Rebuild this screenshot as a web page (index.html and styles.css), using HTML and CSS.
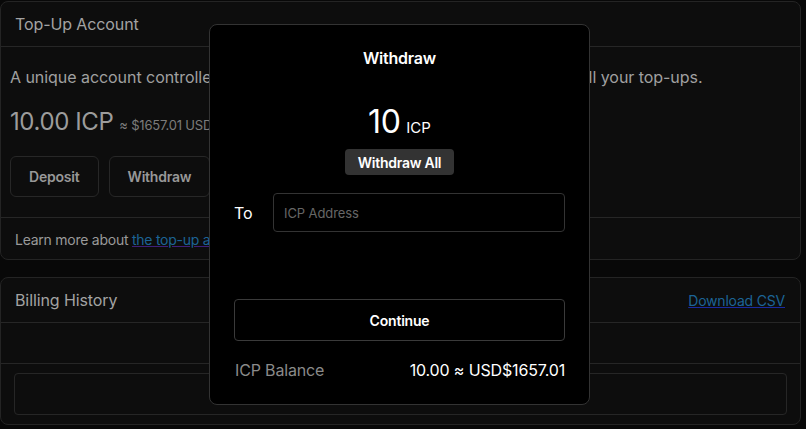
FILE: index.html
```html
<!DOCTYPE html>
<html>
<head>
<meta charset="utf-8">
<link rel="stylesheet" href="styles.css">
</head>
<body>
<div class="page">
  <section class="card">
    <div class="card-head">Top-Up Account</div>
    <div class="card-body">
      <p class="desc">A unique account controlled by your Internet Identity will be used to pay for all your top-ups.</p>
      <div class="balance"><span class="big">10.00 ICP</span><span class="usd">≈ $1657.01 USD</span></div>
      <div class="actions">
        <button class="btn">Deposit</button>
        <button class="btn">Withdraw</button>
      </div>
    </div>
    <div class="card-foot">Learn more about <a class="link" href="#">the top-up account</a>.</div>
  </section>

  <section class="card billing">
    <div class="card-head row">
      <span>Billing History</span>
      <a class="link csv" href="#">Download CSV</a>
    </div>
    <div class="empty-row"></div>
    <div class="table-wrap"><div class="table-box"></div></div>
  </section>
</div>

<div class="modal">
  <div class="modal-title">Withdraw</div>
  <div class="amount"><span class="num">10</span><span class="unit">ICP</span></div>
  <button class="all">Withdraw All</button>
  <div class="to-row">
    <label class="to">To</label>
    <input class="addr" type="text" placeholder="ICP Address">
  </div>
  <button class="continue">Continue</button>
  <div class="bal-row">
    <span class="bal-label">ICP Balance</span>
    <span class="bal-val">10.00 ≈ USD$1657.01</span>
  </div>
</div>
</body>
</html>
```

FILE: styles.css
```css
* { box-sizing: border-box; }
html, body { margin: 0; padding: 0; }
body {
  background: #080808;
  font-family: Inter, "Noto Sans", sans-serif;
  width: 806px;
  height: 429px;
  overflow: hidden;
}
.page {
  width: 801px;
  padding-top: 1px;
  display: flex;
  flex-direction: column;
  gap: 17px;
}
.card {
  background: #0d0d0d;
  border: 1px solid #242424;
  border-radius: 8px;
}
.card-head {
  height: 45px;
  padding: 0 14px;
  display: flex;
  align-items: center;
  font-size: 16px;
  color: #a3a3a3;
  border-bottom: 1px solid #262626;
  letter-spacing: -0.1px;
}
.card-head.row { justify-content: space-between; }
.card-body {
  padding: 18px 9px 20px;
  border-bottom: 1px solid #262626;
}
.desc {
  margin: 0;
  font-size: 16px;
  line-height: 24px;
  color: #a0a0a0;
  letter-spacing: -0.05px;
}
.balance {
  margin-top: 17px;
  display: flex;
  align-items: baseline;
  gap: 6px;
  line-height: 32px;
}
.big { font-size: 24px; color: #9c9c9c; letter-spacing: -0.4px; }
.usd { font-size: 13px; color: #7c7c7c; line-height: 14px; letter-spacing: -0.2px; }
.actions {
  margin-top: 18px;
  display: flex;
  gap: 10px;
}
.btn {
  height: 41px;
  padding: 0 18px;
  background: #0d0d0d;
  border: 1px solid #272727;
  border-radius: 6px;
  font-family: inherit;
  font-size: 14px;
  font-weight: 600;
  color: #989898;
  letter-spacing: -0.2px;
}
.card-foot {
  height: 41px;
  padding: 1px 14px 0;
  display: flex;
  align-items: center;
  font-size: 14px;
  color: #9a9a9a;
  white-space: pre;
  letter-spacing: -0.25px;
}
.link {
  color: #1c6496;
  text-decoration: underline;
  text-decoration-color: #3f1f7a;
}
.csv {
  font-size: 14px;
  margin-right: 1px;
  text-decoration-color: #1a2aa0;
  letter-spacing: -0.2px;
}
.empty-row {
  height: 41px;
  border-bottom: 1px solid #262626;
}
.table-wrap { padding: 9px 13px 9px; }
.table-box {
  height: 42px;
  border: 1px solid #262626;
  border-radius: 4px;
}

.modal {
  position: absolute;
  left: 209px;
  top: 24px;
  width: 381px;
  height: 381px;
  background: #000;
  border: 1px solid #333;
  border-radius: 8px;
  padding: 21px 24px 0;
  display: flex;
  flex-direction: column;
  align-items: center;
  color: #fff;
}
.modal-title {
  font-size: 16px;
  font-weight: 600;
  line-height: 24px;
  letter-spacing: -0.2px;
}
.amount {
  margin-top: 32px;
  display: flex;
  align-items: baseline;
  gap: 6px;
  line-height: 40px;
  height: 40px;
}
.num { font-size: 32px; letter-spacing: -0.5px; }
.unit { font-size: 15px; line-height: 16px; }
.all {
  margin-top: 7px;
  height: 26px;
  padding: 0 13px;
  background: #333;
  border: none;
  border-radius: 4px;
  color: #fff;
  font-family: inherit;
  font-size: 14px;
  font-weight: 600;
  letter-spacing: -0.25px;
}
.to-row {
  margin-top: 18px;
  align-self: stretch;
  display: flex;
  align-items: center;
  gap: 21px;
}
.to { font-size: 16px; width: 18px; }
.addr {
  flex: 1;
  height: 39px;
  background: #000;
  border: 1px solid #333;
  border-radius: 4px;
  padding: 0 10px;
  font-family: inherit;
  font-size: 13px;
  color: #fff;
  outline: none;
  letter-spacing: -0.1px;
}
.addr::placeholder { color: #676767; }
.continue {
  margin-top: 67px;
  align-self: stretch;
  height: 42px;
  background: #000;
  border: 1px solid #3a3a3a;
  border-radius: 4px;
  color: #fff;
  font-family: inherit;
  font-size: 14px;
  font-weight: 600;
  letter-spacing: -0.2px;
}
.bal-row {
  margin-top: 17px;
  align-self: stretch;
  display: flex;
  justify-content: space-between;
  font-size: 16px;
  line-height: 24px;
  padding-left: 1px;
  letter-spacing: -0.15px;
}
.bal-label { color: #8a8a8a; }
.bal-val { color: #fff; }
```
